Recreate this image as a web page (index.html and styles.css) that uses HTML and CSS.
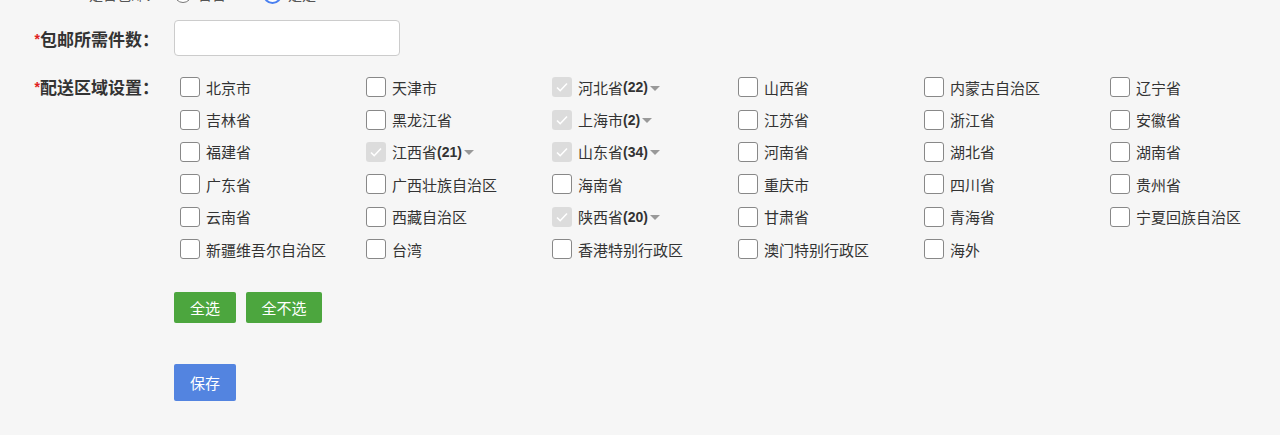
FILE: index.html
```html
<!DOCTYPE html>
<html lang="zh-CN">
<head>
<meta charset="utf-8">
<title>运费设置</title>
<link rel="stylesheet" href="styles.css">
</head>
<body>
<div class="form">
  <div class="row row-top">
    <div class="label label-light">是否包邮：</div>
    <div class="field radios">
      <label class="radio"><span class="radio-dot"></span><span>否否</span></label>
      <label class="radio"><span class="radio-dot on"></span><span>是是</span></label>
    </div>
  </div>

  <div class="row row-input">
    <div class="label"><span class="req">*</span>包邮所需件数：</div>
    <div class="field"><input class="text-input" type="text"></div>
  </div>

  <div class="row row-area">
    <div class="label"><span class="req">*</span>配送区域设置：</div>
    <div class="field">
      <div class="grid">
        <label class="item"><span class="cb"></span>北京市</label>
        <label class="item"><span class="cb"></span>天津市</label>
        <label class="item"><span class="cb dis"><svg viewBox="0 0 20 20"><path d="M5 10.5l3.2 3.2L15 6.5"/></svg></span>河北省<b>(22)</b><span class="caret"></span></label>
        <label class="item"><span class="cb"></span>山西省</label>
        <label class="item"><span class="cb"></span>内蒙古自治区</label>
        <label class="item"><span class="cb"></span>辽宁省</label>

        <label class="item"><span class="cb"></span>吉林省</label>
        <label class="item"><span class="cb"></span>黑龙江省</label>
        <label class="item"><span class="cb dis"><svg viewBox="0 0 20 20"><path d="M5 10.5l3.2 3.2L15 6.5"/></svg></span>上海市<b>(2)</b><span class="caret"></span></label>
        <label class="item"><span class="cb"></span>江苏省</label>
        <label class="item"><span class="cb"></span>浙江省</label>
        <label class="item"><span class="cb"></span>安徽省</label>

        <label class="item"><span class="cb"></span>福建省</label>
        <label class="item"><span class="cb dis"><svg viewBox="0 0 20 20"><path d="M5 10.5l3.2 3.2L15 6.5"/></svg></span>江西省<b>(21)</b><span class="caret"></span></label>
        <label class="item"><span class="cb dis"><svg viewBox="0 0 20 20"><path d="M5 10.5l3.2 3.2L15 6.5"/></svg></span>山东省<b>(34)</b><span class="caret"></span></label>
        <label class="item"><span class="cb"></span>河南省</label>
        <label class="item"><span class="cb"></span>湖北省</label>
        <label class="item"><span class="cb"></span>湖南省</label>

        <label class="item"><span class="cb"></span>广东省</label>
        <label class="item"><span class="cb"></span>广西壮族自治区</label>
        <label class="item"><span class="cb"></span>海南省</label>
        <label class="item"><span class="cb"></span>重庆市</label>
        <label class="item"><span class="cb"></span>四川省</label>
        <label class="item"><span class="cb"></span>贵州省</label>

        <label class="item"><span class="cb"></span>云南省</label>
        <label class="item"><span class="cb"></span>西藏自治区</label>
        <label class="item"><span class="cb dis"><svg viewBox="0 0 20 20"><path d="M5 10.5l3.2 3.2L15 6.5"/></svg></span>陕西省<b>(20)</b><span class="caret"></span></label>
        <label class="item"><span class="cb"></span>甘肃省</label>
        <label class="item"><span class="cb"></span>青海省</label>
        <label class="item"><span class="cb"></span>宁夏回族自治区</label>

        <label class="item"><span class="cb"></span>新疆维吾尔自治区</label>
        <label class="item"><span class="cb"></span>台湾</label>
        <label class="item"><span class="cb"></span>香港特别行政区</label>
        <label class="item"><span class="cb"></span>澳门特别行政区</label>
        <label class="item"><span class="cb"></span>海外</label>
      </div>
      <div class="btns">
        <button class="btn btn-green btn-sel">全选</button>
        <button class="btn btn-green btn-unsel">全不选</button>
      </div>
      <div class="save-row">
        <button class="btn btn-blue">保存</button>
      </div>
    </div>
  </div>
</div>
</body>
</html>
```

FILE: styles.css
```css
html, body {
  margin: 0;
  padding: 0;
  background: #f6f6f6;
}
body {
  font-family: "Liberation Sans", "Noto Sans CJK SC", sans-serif;
  color: #333;
  font-size: 14px;
}
.form {
  margin-top: -23px;
}
.row {
  display: flex;
  align-items: flex-start;
}
.label {
  width: 159px;
  text-align: right;
  font-size: 17px;
  font-weight: bold;
  color: #333;
  flex: none;
  white-space: nowrap;
}
.label-light {
  color: #555;
  font-weight: normal;
}
.req {
  color: #e02020;
  font-size: 14px;
  vertical-align: 2px;
}
.field {
  margin-left: 15px;
  flex: 1;
}
.row-top {
  height: 34px;
  align-items: center;
}
.row-top .label {
  font-size: 14px;
}
.radios {
  display: flex;
  gap: 37px;
  color: #555;
}
.radio {
  display: flex;
  align-items: center;
  gap: 6px;
}
.radio-dot {
  width: 16px;
  height: 16px;
  border: 1px solid #777;
  border-radius: 50%;
  background: #fff;
}
.radio-dot.on {
  border: 2px solid #4a80f0;
  width: 15px;
  height: 15px;
}
.row-input {
  margin-top: 9px;
  align-items: center;
}
.text-input {
  display: block;
  width: 226px;
  height: 36px;
  box-sizing: border-box;
  border: 1px solid #ccc;
  border-radius: 4px;
  background: #fff;
  outline: none;
}
.row-area {
  margin-top: 15px;
}
.row-area .label {
  line-height: 32px;
}
.grid {
  display: grid;
  grid-template-columns: repeat(6, 186px);
  grid-auto-rows: 32.4px;
  padding-left: 6px;
}
.item {
  display: flex;
  align-items: center;
  font-size: 15px;
  color: #333;
  white-space: nowrap;
}
.item b {
  font-weight: bold;
  font-size: 14px;
}
.cb {
  width: 20px;
  height: 20px;
  box-sizing: border-box;
  border: 1px solid #888;
  border-radius: 3px;
  background: #fff;
  margin-right: 6px;
  flex: none;
  display: flex;
}
.cb.dis {
  border: none;
  background: #dcdcdc;
}
.cb svg {
  width: 20px;
  height: 20px;
}
.cb svg path {
  fill: none;
  stroke: #fff;
  stroke-width: 1.6;
}
.caret {
  width: 0;
  height: 0;
  border-left: 5px solid transparent;
  border-right: 5px solid transparent;
  border-top: 5px solid #999;
  margin-left: 2px;
  margin-top: 2px;
}
.btns {
  display: flex;
  gap: 10px;
  margin-top: 27px;
}
.btn {
  font-family: "Liberation Sans", "Noto Sans CJK SC", sans-serif;
  font-size: 15px;
  color: #fff;
  border: none;
  border-radius: 2px;
  height: 31px;
  padding: 0;
  cursor: pointer;
}
.btn-green {
  background: #4ca63e;
}
.btn-sel {
  width: 62px;
}
.btn-unsel {
  width: 76px;
}
.save-row {
  margin-top: 41px;
}
.btn-blue {
  background: #5384e0;
  width: 62px;
  height: 37px;
}
```
